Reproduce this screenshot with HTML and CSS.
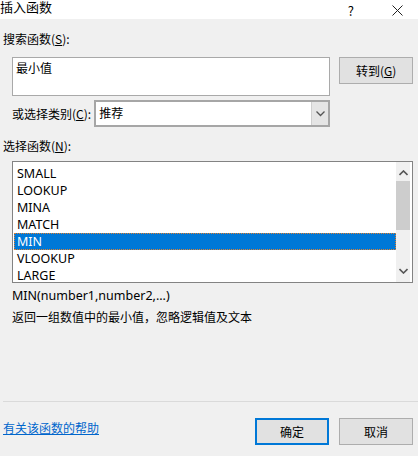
FILE: index.html
```html
<!DOCTYPE html>
<html lang="zh-CN">
<head>
  <meta charset="UTF-8" />
  <title>插入函数</title>
  <link rel="stylesheet" href="styles.css">
</head>
<body>

  <div class="titlebar">
    <span class="title">插入函数</span>
    <span class="help">?</span>
    <svg class="close" width="11" height="11" viewBox="0 0 11 11">
      <path d="M0.5 0.5 L10.5 10.5 M10.5 0.5 L0.5 10.5" stroke="#222" stroke-width="1" />
    </svg>
  </div>

  <div class="dialog">
    <div class="label">搜索函数(<u>S</u>):</div>

    <div class="search-row">
      <div class="search-box">最小值</div>
      <button class="btn">转到(<u>G</u>)</button>
    </div>

    <div class="category-row">
      <span class="label">或选择类别(<u>C</u>):</span>
      <div class="select">
        <span class="select-value">推荐</span>
        <span class="select-arrow">
          <svg width="9" height="6" viewBox="0 0 9 6">
            <path d="M0.5 0.5 L4.5 4.5 L8.5 0.5" fill="none" stroke="#555" stroke-width="1.3" />
          </svg>
        </span>
      </div>
    </div>

    <div class="label list-label">选择函数(<u>N</u>):</div>

    <div class="list">
      <ul class="items">
        <li>SMALL</li>
        <li>LOOKUP</li>
        <li>MINA</li>
        <li>MATCH</li>
        <li class="selected">MIN</li>
        <li>VLOOKUP</li>
        <li>LARGE</li>
      </ul>
      <div class="scrollbar">
        <svg class="arrow" width="9" height="6" viewBox="0 0 9 6">
          <path d="M0.5 5 L4.5 1 L8.5 5" fill="none" stroke="#555" stroke-width="1.6" />
        </svg>
        <div class="track">
          <div class="thumb"></div>
        </div>
        <svg class="arrow" width="9" height="6" viewBox="0 0 9 6">
          <path d="M0.5 1 L4.5 5 L8.5 1" fill="none" stroke="#555" stroke-width="1.6" />
        </svg>
      </div>
    </div>

    <div class="syntax">MIN(number1,number2,...)</div>
    <div class="desc">返回一组数值中的最小值，忽略逻辑值及文本</div>

    <div class="spacer"></div>

    <div class="footer">
      <a href="#" class="help-link">有关该函数的帮助</a>
      <div class="buttons">
        <button class="btn btn-default">确定</button>
        <button class="btn">取消</button>
      </div>
    </div>
  </div>

</body>
</html>
```

FILE: styles.css
```css
body {
  margin: 0;
  width: 418px;
  height: 456px;
  font-family: "Noto Sans CJK SC", "Noto Sans", sans-serif;
  font-size: 12px;
  color: #000;
  background: #f0f0f0;
  overflow: hidden;
  display: flex;
  flex-direction: column;
}

u {
  text-decoration: underline;
  text-underline-offset: 1px;
}

.titlebar {
  background: white;
  height: 19px;
  display: flex;
  align-items: flex-start;
  font-size: 13px;
}

.title {
  flex: 1;
  line-height: 14px;
}

.help {
  font-size: 13px;
  line-height: 14px;
  margin-right: 38px;
  margin-top: 4px;
}

.close {
  margin-right: 15px;
  margin-top: 5px;
}

.dialog {
  flex: 1;
  display: flex;
  flex-direction: column;
  padding: 0 5px 0 3px;
}

.label {
  line-height: 16px;
  white-space: nowrap;
}

.dialog > .label:first-child {
  margin-top: 12px;
}

.search-row {
  display: flex;
  align-items: flex-start;
  margin-top: 10px;
  padding-left: 9px;
}

.search-box {
  width: 312px;
  height: 36px;
  background: white;
  border: 1px solid #a9a9a9;
  padding: 1px 3px 0 3px;
  line-height: 18px;
}

.btn {
  font-family: inherit;
  font-size: 12px;
  width: 74px;
  height: 27px;
  background: #e1e1e1;
  border: 1px solid #adadad;
  padding: 0;
  color: #000;
}

.search-row .btn {
  margin-left: 9px;
}

.category-row {
  display: flex;
  align-items: center;
  margin-top: 4px;
  padding-left: 9px;
}

.select {
  margin-left: 3px;
  width: 232px;
  height: 23px;
  border: 2px solid #a6a6a6;
  background: white;
  display: flex;
}

.select-value {
  flex: 1;
  padding-left: 3px;
  line-height: 21px;
}

.select-arrow {
  width: 16px;
  background: #e5e5e5;
  border-left: 1px solid #cfcfcf;
  display: flex;
  align-items: center;
  justify-content: center;
}

.list-label {
  margin-top: 11px;
}

.list {
  margin: 7px 0 0 9px;
  height: 120px;
  border: 1px solid #838383;
  background: white;
  display: flex;
}

.items {
  list-style: none;
  margin: 0;
  padding: 3px 0 0 1px;
  flex: 1;
  font-family: "Noto Sans", sans-serif;
}

.items li {
  height: 17px;
  line-height: 17px;
  padding-left: 3px;
  font-size: 12.5px;
}

.items li.selected {
  background: #0078d7;
  color: white;
  outline: 1px dotted #e08030;
  outline-offset: -1px;
}

.scrollbar {
  width: 14px;
  margin-right: 2px;
  background: #f0f0f0;
  display: flex;
  flex-direction: column;
  align-items: center;
}

.arrow {
  margin: 8px 0 5px;
}

.scrollbar .arrow:last-child {
  margin: 6px 0 8px;
}

.track {
  flex: 1;
  width: 100%;
}

.thumb {
  height: 49px;
  background: #cdcdcd;
}

.syntax {
  margin: 5px 0 0 9px;
  line-height: 16px;
  font-size: 12.5px;
  font-family: "Noto Sans", sans-serif;
}

.desc {
  margin: 5px 0 0 9px;
  line-height: 16px;
}

.spacer {
  flex: 1;
}

.footer {
  border-top: 1px solid #dadada;
  display: flex;
  align-items: flex-start;
  margin-bottom: 11px;
  padding-top: 16px;
  margin-right: -5px;
}

.help-link {
  color: #0066cc;
  text-decoration: underline;
  margin-top: 1px;
  flex: 1;
}

.buttons {
  display: flex;
  gap: 10px;
  margin-right: 5px;
}

.btn-default {
  border: 2px solid #0078d7;
}
```
